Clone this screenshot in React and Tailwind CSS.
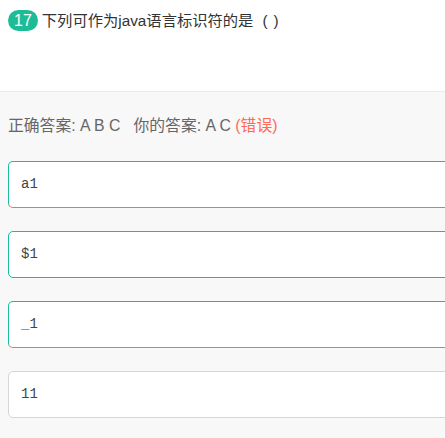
export default function App() {
  const opciones = [
    { texto: "a1", borde: "border-t-[#1abc9c] border-l-[#1abc9c] border-r-[#1abc9c] border-b-[#ff6a55]" },
    { texto: "$1", borde: "border-[#1abc9c]" },
    { texto: "_1", borde: "border-t-[#1abc9c] border-l-[#1abc9c] border-r-[#1abc9c] border-b-[#ff6a55]" },
    { texto: "11", borde: "border-[#d6d6d6]" },
  ]

  return (
    <div className="w-[445px] h-[438px] overflow-hidden bg-white font-['Liberation_Sans','Noto_Sans_CJK_SC',sans-serif]">
      <div className="h-[91px] pl-2 pt-[10px] flex items-start">
        <span className="h-[21px] px-[6px] rounded-full bg-[#1dbc96] text-white text-[16px] leading-[21px]">17</span>
        <span className="ml-[4px] text-[15.3px] leading-[21px] text-[#333]">
          下列可作为java语言标识符的是<span className="ml-[9px]">(</span><span className="ml-[6px]">)</span>
        </span>
      </div>

      <div className="border-t border-[#ebebeb] bg-[#f8f8f8] h-[347px] pl-2 pt-[24px]">
        <p className="text-[15.8px] leading-[20px] text-[#666]">
          正确答案: A B C &nbsp; 你的答案: A C <span className="text-[#ff6a55]">(错误)</span>
        </p>

        <div className="mt-[25px] flex flex-col gap-[23px] mr-[-30px]">
          {opciones.map(op => (
            <div
              key={op.texto}
              className={`h-[47px] bg-white border rounded-[5px] pl-3 flex items-center ${op.borde}`}
            >
              <span className="font-['Liberation_Mono',monospace] text-[14px] text-[#444]">{op.texto}</span>
            </div>
          ))}
        </div>
      </div>
    </div>
  )
}
